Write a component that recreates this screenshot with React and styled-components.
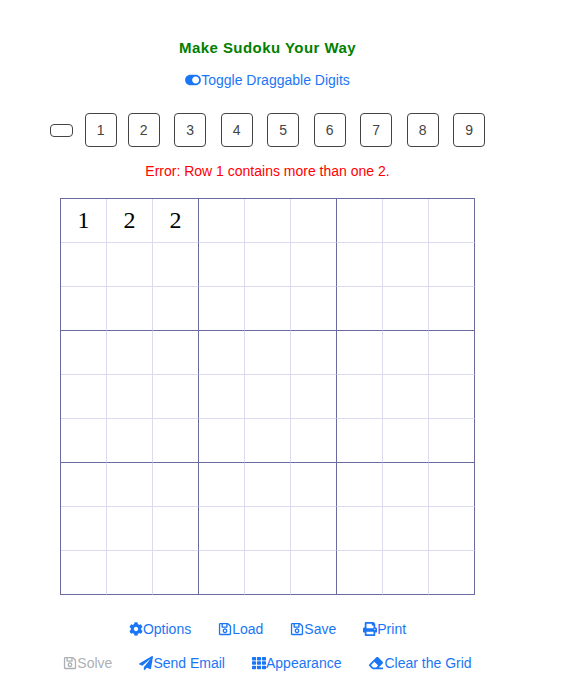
import React from 'react';
import styled, { createGlobalStyle } from 'styled-components';
import { FaCog, FaRegSave, FaPrint, FaPaperPlane, FaTh, FaEraser, FaToggleOn } from 'react-icons/fa';

const GlobalStyle = createGlobalStyle`
  html, body {
    margin: 0;
    padding: 0;
    background: #fff;
    font-family: "Liberation Sans", Arial, sans-serif;
    font-size: 14px;
  }
`;

const Page = styled.div`
  width: 535px;
  padding-top: 39px;
  display: flex;
  flex-direction: column;
  align-items: center;
`;

const Title = styled.h1`
  margin: 0;
  font-size: 15px;
  line-height: 18px;
  font-weight: bold;
  letter-spacing: 0.45px;
  color: green;
`;

const ActionLink = styled.a`
  display: inline-flex;
  align-items: center;
  font-size: 14px;
  line-height: 18px;
  cursor: pointer;
  color: ${(p) => (p.$disabled ? '#adb0b5' : '#1a76f5')};
  svg {
    width: ${(p) => p.$iconWidth || 14}px;
    height: 14px;
    flex-shrink: 0;
  }
`;

const ToggleRow = styled.div`
  margin-top: 14px;
`;

const DigitRow = styled.div`
  margin-top: 23px;
  display: flex;
  align-items: center;
`;

const DigitButton = styled.button`
  box-sizing: border-box;
  width: ${(p) => (p.$blank ? 23 : 32)}px;
  height: ${(p) => (p.$blank ? 13 : 34)}px;
  margin-right: ${(p) => p.$gap}px;
  padding: 0;
  background: #fff;
  border: 1px solid #444;
  border-radius: 4px;
  font-family: inherit;
  font-size: 14px;
  color: #444;
  cursor: grab;
`;

const ErrorText = styled.div`
  margin-top: 15px;
  font-size: 14px;
  line-height: 18px;
  color: red;
`;

const Board = styled.div`
  margin-top: 18px;
  display: grid;
  grid-template-columns: repeat(9, 46px);
  grid-auto-rows: 44px;
  border-top: 1px solid #6a6a9e;
  border-left: 1px solid #6a6a9e;
`;

const Cell = styled.div`
  display: flex;
  align-items: center;
  justify-content: center;
  font-family: "Liberation Serif", "Times New Roman", serif;
  font-size: 24px;
  color: #000;
  border-right: 1px solid ${(p) => (p.$col % 3 === 2 ? '#6a6a9e' : '#dcdaee')};
  border-bottom: 1px solid ${(p) => (p.$row % 3 === 2 ? '#6a6a9e' : '#dcdaee')};
`;

const ActionRow = styled.div`
  display: flex;
  justify-content: center;
  gap: 27px;
  margin-top: ${(p) => p.$top}px;
`;

const firstRow = ['1', '2', '2'];
const digits = [1, 2, 3, 4, 5, 6, 7, 8, 9];

const cells = [];
for (let row = 0; row < 9; row++) {
  for (let col = 0; col < 9; col++) {
    cells.push({ row, col, value: row === 0 ? firstRow[col] : '' });
  }
}

export default function App() {
  return (
    <Page>
      <GlobalStyle />
      <Title>Make Sudoku Your Way</Title>
      <ToggleRow>
        <ActionLink $iconWidth={16}><FaToggleOn />Toggle Draggable Digits</ActionLink>
      </ToggleRow>
      <DigitRow>
        <DigitButton $blank $gap={12} />
        {digits.map((d, i) => (
          <DigitButton key={d} $gap={i === 0 ? 11 : i === 8 ? 0 : 14.5}>{d}</DigitButton>
        ))}
      </DigitRow>
      <ErrorText>Error: Row 1 contains more than one 2.</ErrorText>
      <Board>
        {cells.map((c) => (
          <Cell key={`${c.row}-${c.col}`} $row={c.row} $col={c.col}>{c.value}</Cell>
        ))}
      </Board>
      <ActionRow $top={25}>
        <ActionLink><FaCog />Options</ActionLink>
        <ActionLink><FaRegSave />Load</ActionLink>
        <ActionLink><FaRegSave />Save</ActionLink>
        <ActionLink><FaPrint />Print</ActionLink>
      </ActionRow>
      <ActionRow $top={16}>
        <ActionLink $disabled><FaRegSave />Solve</ActionLink>
        <ActionLink><FaPaperPlane />Send Email</ActionLink>
        <ActionLink><FaTh />Appearance</ActionLink>
        <ActionLink $iconWidth={16}><FaEraser />Clear the Grid</ActionLink>
      </ActionRow>
    </Page>
  );
}
